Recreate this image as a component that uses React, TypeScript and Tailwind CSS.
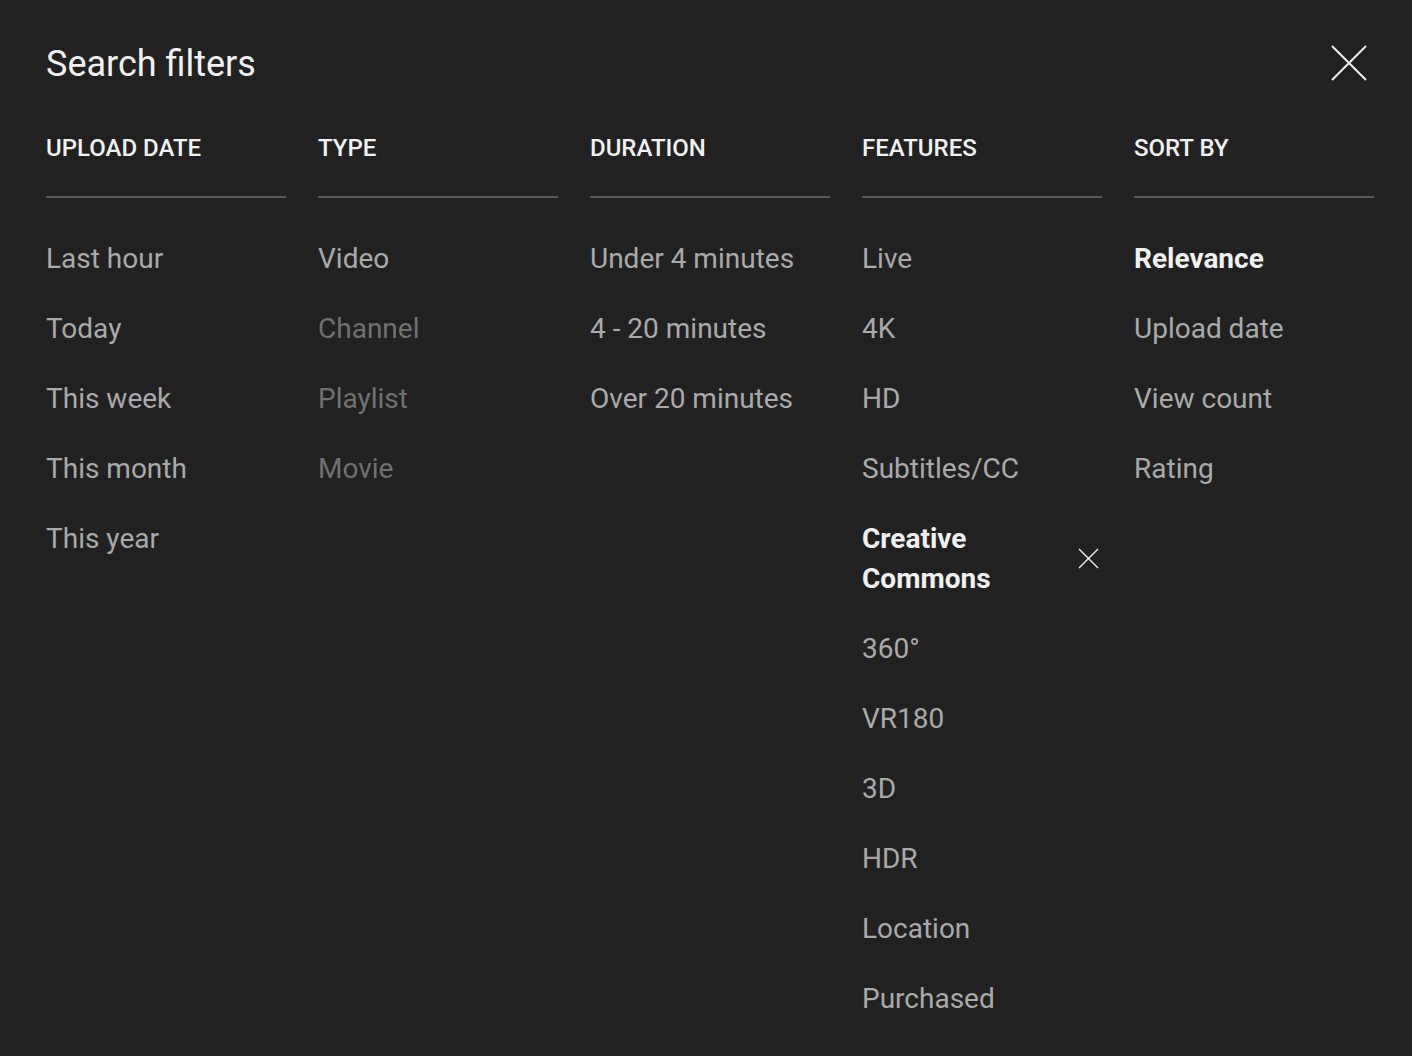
type Item = { label: string; state?: "active" | "disabled" | "normal"; removable?: boolean }

const columns: { title: string; items: Item[] }[] = [
    {
        title: "UPLOAD DATE",
        items: [{ label: "Last hour" }, { label: "Today" }, { label: "This week" }, { label: "This month" }, { label: "This year" }],
    },
    {
        title: "TYPE",
        items: [
            { label: "Video" },
            { label: "Channel", state: "disabled" },
            { label: "Playlist", state: "disabled" },
            { label: "Movie", state: "disabled" },
        ],
    },
    {
        title: "DURATION",
        items: [{ label: "Under 4 minutes" }, { label: "4 - 20 minutes" }, { label: "Over 20 minutes" }],
    },
    {
        title: "FEATURES",
        items: [
            { label: "Live" },
            { label: "4K" },
            { label: "HD" },
            { label: "Subtitles/CC" },
            { label: "Creative Commons", state: "active", removable: true },
            { label: "360°" },
            { label: "VR180" },
            { label: "3D" },
            { label: "HDR" },
            { label: "Location" },
            { label: "Purchased" },
        ],
    },
    {
        title: "SORT BY",
        items: [{ label: "Relevance", state: "active" }, { label: "Upload date" }, { label: "View count" }, { label: "Rating" }],
    },
]

function Cross({ size, stroke }: { size: number; stroke: number }) {
    return (
        <svg width={size} height={size} viewBox={`0 0 ${size} ${size}`} fill="none" stroke="currentColor" strokeWidth={stroke}>
            <path d={`M1 1L${size - 1} ${size - 1}M${size - 1} 1L1 ${size - 1}`} />
        </svg>
    )
}

export default function App() {
    return (
        <main className="min-h-[1056px] w-full bg-[#212121] font-['Roboto',sans-serif] pl-[46px] pr-[38px] pt-[40px]">
            <div className="flex items-center justify-between h-[48px]">
                <h1 className="text-[36px] text-[#f1f1f1] leading-none">Search filters</h1>
                <button className="flex items-center justify-center mr-[7px] -mt-[3px] text-[#f1f1f1]">
                    <Cross size={36} stroke={2} />
                </button>
            </div>
            <div className="flex gap-[32px] mt-[48px]">
                {columns.map((col) => (
                    <section key={col.title} className="w-[240px] shrink-0 flex flex-col">
                        <h2 className="text-[24px] font-medium text-[#f1f1f1] leading-[24px] pb-[36px] border-b-2 border-[#5c5c5c]">
                            {col.title}
                        </h2>
                        <ul className="pt-[26px]">
                            {col.items.map((item) => (
                                <li key={item.label} className="flex items-center justify-between py-[15px]">
                                    <span
                                        className={
                                            "text-[28px] leading-[40px] " +
                                            (item.state === "active"
                                                ? "font-bold text-[#f1f1f1] w-[180px]"
                                                : item.state === "disabled"
                                                  ? "text-[#717171]"
                                                  : "text-[#aaaaaa]")
                                        }
                                    >
                                        {item.label}
                                    </span>
                                    {item.removable && (
                                        <span className="text-[#f1f1f1] mr-[3px] -mt-[1px]">
                                            <Cross size={21} stroke={1.4} />
                                        </span>
                                    )}
                                </li>
                            ))}
                        </ul>
                    </section>
                ))}
            </div>
        </main>
    )
}
